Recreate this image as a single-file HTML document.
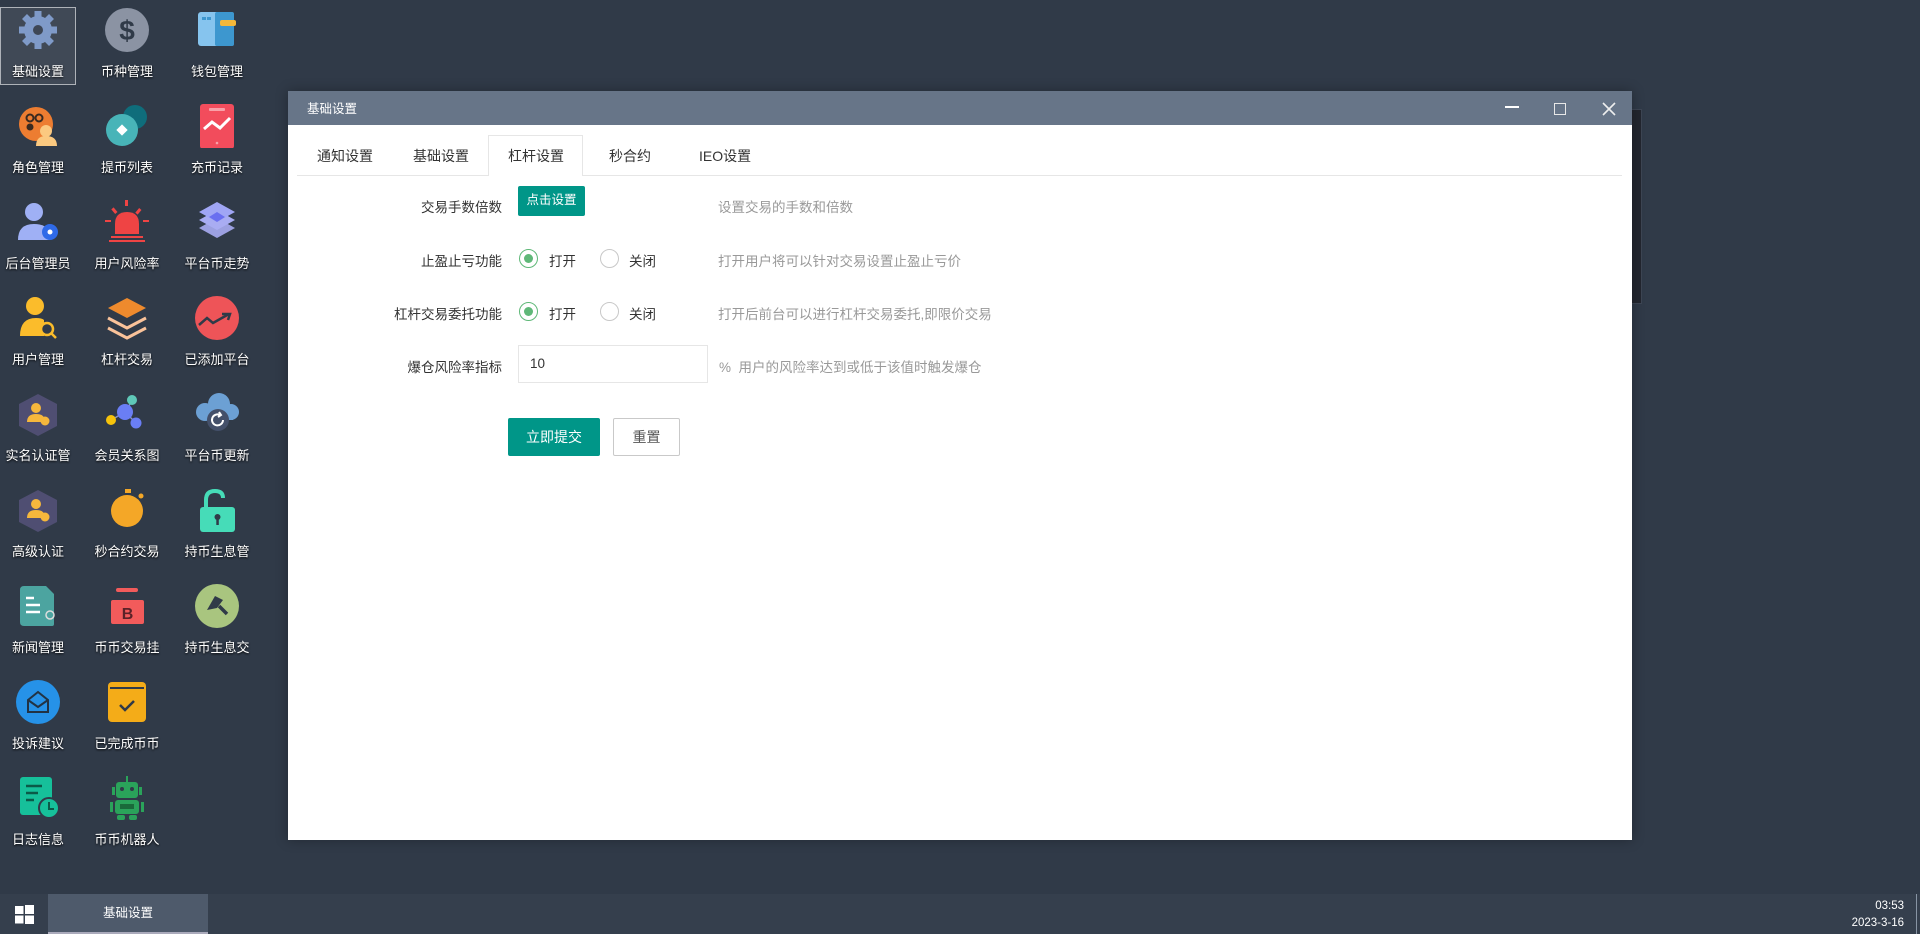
<!DOCTYPE html>
<html><head><meta charset="utf-8"><style>
*{margin:0;padding:0;box-sizing:border-box}
body{width:1920px;height:934px;overflow:hidden;background:#303a48;font-family:"Liberation Sans","Noto Sans CJK SC",sans-serif;position:relative}
.ic{position:absolute;width:90px;text-align:center;color:#fff;font-size:13px}
.ic svg{display:block;margin:0 auto}
.ic span{position:absolute;left:0;width:90px;top:53px;text-shadow:0 1px 2px #000}
.abs{position:absolute}
.lbl{position:absolute;right:1418px;font-size:13.5px;color:#333;white-space:nowrap}
.desc{position:absolute;font-size:13.5px;color:#999;white-space:nowrap}
.radio{position:absolute;width:19px;height:19px;border-radius:50%;border:1px solid #c8c8c8;background:#fff}
.radio.on{border-color:#5fb878}
.radio.on::after{content:"";position:absolute;left:4px;top:4px;width:9px;height:9px;border-radius:50%;background:#5fb878}
.rt{position:absolute;font-size:13.5px;color:#333}
.tab{position:absolute;top:146px;font-size:14px;color:#333}
</style></head><body>

<div class="abs" style="left:0;top:7px;width:76px;height:78px;border:1px solid #aeb2b8;background:rgba(255,255,255,0.08)"></div>

<div class="ic" style="left:-7px;top:8px"><svg width="44" height="44" viewBox="0 0 44 44"><g fill="#7f9ac8"><circle cx="22" cy="22" r="14"/><g stroke="#7f9ac8" stroke-width="7"><line x1="22" y1="3" x2="22" y2="41"/><line x1="3" y1="22" x2="41" y2="22"/><line x1="8.5" y1="8.5" x2="35.5" y2="35.5"/><line x1="35.5" y1="8.5" x2="8.5" y2="35.5"/></g></g><circle cx="22" cy="22" r="5" fill="#3e4756"/></svg><span>基础设置</span></div>
<div class="ic" style="left:-7px;top:104px"><svg width="44" height="44" viewBox="0 0 44 44"><circle cx="20" cy="20" r="17" fill="#ed7d31"/><circle cx="14" cy="14" r="3.5" fill="none" stroke="#3a2a20" stroke-width="2"/><circle cx="23" cy="14" r="3.5" fill="none" stroke="#3a2a20" stroke-width="2"/><circle cx="14" cy="23" r="3.5" fill="#3a2a20"/><circle cx="30" cy="27" r="6" fill="#fbc980"/><path d="M20 42 Q20 32 30 32 Q41 32 41 42Z" fill="#fbc980"/></svg><span>角色管理</span></div>
<div class="ic" style="left:-7px;top:200px"><svg width="44" height="44" viewBox="0 0 44 44"><circle cx="18" cy="12" r="9" fill="#9fb0f5"/><path d="M2 40 Q2 24 18 24 Q30 24 34 32 L34 40Z" fill="#9fb0f5"/><circle cx="34" cy="32" r="8" fill="#2f6ae8"/><circle cx="34" cy="32" r="2.5" fill="#fff"/></svg><span>后台管理员</span></div>
<div class="ic" style="left:-7px;top:296px"><svg width="44" height="44" viewBox="0 0 44 44"><circle cx="19" cy="10" r="9" fill="#fbbc2b"/><path d="M4 40 Q4 22 20 22 Q26 22 28 24 L28 40Z" fill="#fbbc2b"/><circle cx="31" cy="33" r="6" fill="#303a48" stroke="#fbbc2b" stroke-width="2.5"/><line x1="35" y1="37" x2="40" y2="42" stroke="#fbbc2b" stroke-width="2.5"/></svg><span>用户管理</span></div>
<div class="ic" style="left:-7px;top:392px"><svg width="44" height="46" viewBox="0 0 44 46"><polygon points="22,2 41,12 41,34 22,44 3,34 3,12" fill="#4f4e72"/><circle cx="20" cy="16" r="5" fill="#f6b73c"/><path d="M11 30 Q11 22 20 22 Q27 22 28 26 L28 30Z" fill="#f6b73c"/><circle cx="29" cy="29" r="4.5" fill="#f6b73c"/></svg><span>实名认证管</span></div>
<div class="ic" style="left:-7px;top:488px"><svg width="44" height="46" viewBox="0 0 44 46"><polygon points="22,2 41,12 41,34 22,44 3,34 3,12" fill="#4f4e72"/><circle cx="20" cy="16" r="5" fill="#f6b73c"/><path d="M11 30 Q11 22 20 22 Q27 22 28 26 L28 30Z" fill="#f6b73c"/><circle cx="29" cy="29" r="4.5" fill="#f6b73c"/></svg><span>高级认证</span></div>
<div class="ic" style="left:-7px;top:584px"><svg width="44" height="44" viewBox="0 0 44 44"><path d="M4 6 Q4 2 8 2 L30 2 L38 10 L38 40 Q38 42 36 42 L8 42 Q4 42 4 38Z" fill="#4ca4a0"/><g stroke="#fff" stroke-width="2.5"><line x1="10" y1="14" x2="18" y2="14"/><line x1="10" y1="21" x2="24" y2="21"/><line x1="10" y1="28" x2="24" y2="28"/></g><circle cx="34" cy="31" r="4" fill="none" stroke="#ddd" stroke-width="1.5"/></svg><span>新闻管理</span></div>
<div class="ic" style="left:-7px;top:680px"><svg width="44" height="44" viewBox="0 0 44 44"><circle cx="22" cy="22" r="22" fill="#2692e8"/><path d="M12 20 L22 12 L32 20 L32 32 L12 32Z" fill="none" stroke="#234" stroke-width="2"/><path d="M12 20 L22 27 L32 20" fill="none" stroke="#234" stroke-width="2"/></svg><span>投诉建议</span></div>
<div class="ic" style="left:-7px;top:776px"><svg width="44" height="44" viewBox="0 0 44 44"><rect x="4" y="1" width="32" height="38" rx="3" fill="#16c09a"/><g stroke="#0b5a48" stroke-width="2.5"><line x1="10" y1="10" x2="26" y2="10"/><line x1="10" y1="17" x2="22" y2="17"/><line x1="10" y1="24" x2="18" y2="24"/></g><circle cx="33" cy="32" r="10" fill="#16c09a" stroke="#303a48" stroke-width="2"/><path d="M33 26 L33 33 L38 33" fill="none" stroke="#0b5a48" stroke-width="2"/></svg><span>日志信息</span></div>

<div class="ic" style="left:82px;top:8px"><svg width="44" height="44" viewBox="0 0 44 44"><circle cx="22" cy="22" r="22" fill="#8b93a3"/><text x="22" y="32" font-size="28" font-weight="bold" text-anchor="middle" fill="#303a48" font-family="Liberation Sans">$</text></svg><span>币种管理</span></div>
<div class="ic" style="left:82px;top:104px"><svg width="46" height="44" viewBox="0 0 46 44"><circle cx="31" cy="13" r="12" fill="#0f6d7b"/><circle cx="18" cy="26" r="16" fill="#48b4b8"/><rect x="14" y="22" width="8" height="8" fill="#fff" transform="rotate(45 18 26)"/></svg><span>提币列表</span></div>
<div class="ic" style="left:82px;top:200px"><svg width="44" height="44" viewBox="0 0 44 44"><g fill="#ef4444"><rect x="20" y="0" width="3" height="6"/><rect x="8" y="8" width="3" height="6" transform="rotate(-40 9 11)"/><rect x="32" y="8" width="3" height="6" transform="rotate(40 33 11)"/><rect x="0" y="20" width="6" height="2"/><rect x="38" y="20" width="6" height="2"/><path d="M10 34 L10 24 Q10 12 22 12 Q34 12 34 24 L34 34Z"/><rect x="6" y="36" width="32" height="2"/><rect x="4" y="40" width="36" height="2"/></g></svg><span>用户风险率</span></div>
<div class="ic" style="left:82px;top:296px"><svg width="44" height="44" viewBox="0 0 44 44"><polygon points="22,2 41,12 22,22 3,12" fill="#ee8a2d"/><polyline points="3,22 22,32 41,22" fill="none" stroke="#f9c29a" stroke-width="3"/><polyline points="3,32 22,42 41,32" fill="none" stroke="#f9c29a" stroke-width="3"/></svg><span>杠杆交易</span></div>
<div class="ic" style="left:82px;top:392px"><svg width="44" height="44" viewBox="0 0 44 44"><g stroke="#8b93c8" stroke-width="1.5"><line x1="20" y1="20" x2="27" y2="9"/><line x1="20" y1="20" x2="8" y2="27"/><line x1="20" y1="20" x2="30" y2="30"/></g><circle cx="27" cy="8" r="5" fill="#5fc8b8"/><circle cx="20" cy="20" r="8" fill="#6a7ef5"/><circle cx="6" cy="28" r="5" fill="#f6c30b"/><circle cx="31" cy="31" r="5.5" fill="#6a7ef5"/></svg><span>会员关系图</span></div>
<div class="ic" style="left:82px;top:488px"><svg width="44" height="44" viewBox="0 0 44 44"><rect x="20" y="1" width="6" height="4" fill="#f4a727"/><circle cx="36" cy="8" r="2.5" fill="#f4a727"/><circle cx="22" cy="23" r="16" fill="#f4a727"/></svg><span>秒合约交易</span></div>
<div class="ic" style="left:82px;top:584px"><svg width="44" height="44" viewBox="0 0 44 44"><rect x="11" y="4" width="22" height="4" rx="2" fill="#f25b5b"/><rect x="6" y="16" width="33" height="24" rx="2" fill="#f25b5b"/><text x="22.5" y="35" font-size="16" font-weight="bold" text-anchor="middle" fill="#5a2228" font-family="Liberation Sans">B</text></svg><span>币币交易挂</span></div>
<div class="ic" style="left:82px;top:680px"><svg width="44" height="44" viewBox="0 0 44 44"><rect x="3" y="2" width="38" height="40" rx="4" fill="#f4ac18"/><line x1="5" y1="8" x2="39" y2="8" stroke="#303a48" stroke-width="2"/><polyline points="15,25 20,30 29,21" fill="none" stroke="#303a48" stroke-width="2.5"/></svg><span>已完成币币</span></div>
<div class="ic" style="left:82px;top:776px"><svg width="44" height="46" viewBox="0 0 44 46"><g fill="#2aa35a"><rect x="21" y="0" width="2" height="6"/><rect x="11" y="6" width="22" height="16" rx="3"/><rect x="7" y="11" width="3" height="8"/><rect x="34" y="11" width="3" height="8"/><rect x="10" y="24" width="24" height="14" rx="3"/><rect x="5" y="26" width="3" height="10"/><rect x="36" y="26" width="3" height="10"/><rect x="12" y="39" width="8" height="5" rx="2"/><rect x="24" y="39" width="8" height="5" rx="2"/></g><circle cx="17" cy="13" r="2" fill="#303a48"/><circle cx="27" cy="13" r="2" fill="#303a48"/><rect x="15" y="28" width="14" height="5" fill="#1a6a3a"/></svg><span>币币机器人</span></div>

<div class="ic" style="left:172px;top:8px"><svg width="44" height="44" viewBox="0 0 44 44"><rect x="3" y="4" width="36" height="34" rx="3" fill="#86c4ee"/><rect x="20" y="4" width="19" height="34" rx="2" fill="#3d97cf"/><rect x="7" y="9" width="4" height="3" fill="#3d97cf"/><rect x="12" y="9" width="4" height="3" fill="#3d97cf"/><rect x="25" y="12" width="16" height="6" rx="2" fill="#f4b83a"/></svg><span>钱包管理</span></div>
<div class="ic" style="left:172px;top:104px"><svg width="44" height="44" viewBox="0 0 44 44"><rect x="5" y="0" width="34" height="45" rx="3" fill="#f24c5c"/><rect x="14" y="4" width="16" height="3" rx="1" fill="#f9a0a8"/><polyline points="9,25 17,18 25,24 35,14" fill="none" stroke="#fff" stroke-width="3"/><circle cx="22" cy="39" r="1.3" fill="#f9a0a8"/></svg><span>充币记录</span></div>
<div class="ic" style="left:172px;top:200px"><svg width="44" height="44" viewBox="0 0 44 44"><polygon points="22,30 40,20 22,10 4,20" fill="#a8acf2"/><polygon points="22,38 40,28 22,18 4,28" fill="#a8acf2" opacity=".9"/><polygon points="22,22 40,12 22,2 4,12" fill="#a0a6f5"/><polygon points="22,22 30,17 22,12 14,17" fill="#6a6ff0"/></svg><span>平台币走势</span></div>
<div class="ic" style="left:172px;top:296px"><svg width="44" height="44" viewBox="0 0 44 44"><circle cx="22" cy="22" r="22" fill="#ee5458"/><polyline points="4,29 12,22 18,27 34,18" fill="none" stroke="#303a48" stroke-width="2.5"/><polyline points="27,18 35,18 33,24" fill="none" stroke="#303a48" stroke-width="2.5"/></svg><span>已添加平台</span></div>
<div class="ic" style="left:172px;top:392px"><svg width="44" height="44" viewBox="0 0 44 44"><circle cx="24" cy="12" r="11" fill="#6ca0d4"/><circle cx="10" cy="20" r="9" fill="#6ca0d4"/><circle cx="36" cy="20" r="8" fill="#6ca0d4"/><rect x="8" y="14" width="30" height="14" fill="#6ca0d4"/><circle cx="23" cy="28" r="11" fill="#44506a"/><path d="M28 28 A5.5 5.5 0 1 1 25 23" fill="none" stroke="#fff" stroke-width="2"/><polyline points="24,20 26,23 23,25" fill="none" stroke="#fff" stroke-width="2"/></svg><span>平台币更新</span></div>
<div class="ic" style="left:172px;top:488px"><svg width="44" height="44" viewBox="0 0 44 44"><path d="M11 22 L11 12 Q11 3 20 3 Q28 3 28 10" fill="none" stroke="#46dcb8" stroke-width="4"/><rect x="5" y="19" width="35" height="25" rx="3" fill="#46dcb8"/><circle cx="22.5" cy="29" r="3" fill="#303a48"/><rect x="21.3" y="30" width="2.5" height="7" fill="#303a48"/></svg><span>持币生息管</span></div>
<div class="ic" style="left:172px;top:584px"><svg width="44" height="44" viewBox="0 0 44 44"><circle cx="22" cy="22" r="22" fill="#a9c57f"/><polygon points="12,26 20,12 28,16 22,24" fill="#303a48"/><line x1="24" y1="22" x2="32" y2="30" stroke="#303a48" stroke-width="3.5"/></svg><span>持币生息交</span></div>

<div class="abs" style="left:1600px;top:109px;width:42px;height:195px;background:#22262f;border:1px solid #3e4654"></div>

<div class="abs" style="left:288px;top:91px;width:1344px;height:749px;background:#fff;box-shadow:0 0 12px rgba(0,0,0,.3)">
  <div class="abs" style="left:0;top:0;width:1344px;height:34px;background:#677588"></div>
  <div class="abs" style="left:19px;top:7px;color:#fff;font-size:12.5px">基础设置</div>
  <div class="abs" style="left:1217px;top:15px;width:14px;height:2px;background:#fff"></div>
  <div class="abs" style="left:1266px;top:12px;width:12px;height:12px;border:1.5px solid #e8e8e8"></div>
  <svg class="abs" style="left:1314px;top:11px" width="14" height="14"><path d="M1 1 L13 13 M13 1 L1 13" stroke="#eee" stroke-width="1.6"/></svg>
  <div class="abs" style="left:9px;top:84px;width:1325px;height:1px;background:#e6e6e6"></div>
  <div class="abs" style="left:200px;top:44px;width:95px;height:41px;background:#fff;border:1px solid #e6e6e6;border-bottom:none"></div>
</div>
<div class="tab" style="left:317px">通知设置</div>
<div class="tab" style="left:413px">基础设置</div>
<div class="tab" style="left:508px">杠杆设置</div>
<div class="tab" style="left:609px">秒合约</div>
<div class="tab" style="left:699px">IEO设置</div>

<div class="lbl" style="top:196px">交易手数倍数</div>
<div class="abs" style="left:518px;top:186px;width:67px;height:30px;background:#009688;color:#fff;font-size:12.5px;line-height:29px;text-align:center;border-radius:2px">点击设置</div>
<div class="desc" style="left:718px;top:196px">设置交易的手数和倍数</div>

<div class="lbl" style="top:250px">止盈止亏功能</div>
<div class="radio on" style="left:519px;top:249px"></div><div class="rt" style="left:549px;top:250px">打开</div>
<div class="radio" style="left:600px;top:249px"></div><div class="rt" style="left:629px;top:250px">关闭</div>
<div class="desc" style="left:718px;top:250px">打开用户将可以针对交易设置止盈止亏价</div>

<div class="lbl" style="top:303px">杠杆交易委托功能</div>
<div class="radio on" style="left:519px;top:302px"></div><div class="rt" style="left:549px;top:303px">打开</div>
<div class="radio" style="left:600px;top:302px"></div><div class="rt" style="left:629px;top:303px">关闭</div>
<div class="desc" style="left:718px;top:303px">打开后前台可以进行杠杆交易委托,即限价交易</div>

<div class="lbl" style="top:356px">爆仓风险率指标</div>
<div class="abs" style="left:518px;top:345px;width:190px;height:38px;border:1px solid #e6e6e6;font-size:13.5px;color:#333;padding:10px 0 0 11px">10</div>
<div class="desc" style="left:719px;top:356px">%&nbsp;&nbsp;用户的风险率达到或低于该值时触发爆仓</div>

<div class="abs" style="left:508px;top:418px;width:92px;height:38px;background:#009688;color:#fff;font-size:14px;line-height:38px;text-align:center;border-radius:2px">立即提交</div>
<div class="abs" style="left:613px;top:418px;width:67px;height:38px;border:1px solid #c9c9c9;color:#555;font-size:14px;line-height:36px;text-align:center;border-radius:2px;background:#fff">重置</div>

<div class="abs" style="left:0;top:894px;width:1920px;height:40px;background:#353f4d"></div>
<svg class="abs" style="left:15px;top:905px" width="19" height="19"><g fill="#fff"><rect x="0" y="1" width="8.5" height="8" /><rect x="10" y="0" width="9" height="9"/><rect x="0" y="10.5" width="8.5" height="8"/><rect x="10" y="10.5" width="9" height="8.5"/></g></svg>
<div class="abs" style="left:48px;top:894px;width:160px;height:40px;background:#4e5a6b;color:#fff;font-size:12.5px;text-align:center;line-height:38px">基础设置</div>
<div class="abs" style="left:48px;top:932px;width:160px;height:2px;background:#aab"></div>
<div class="abs" style="left:1840px;top:898px;width:70px;color:#fff;font-size:11.5px;text-align:right;line-height:17px;padding-right:6px">03:53<br>2023-3-16</div>
<div class="abs" style="left:1916px;top:894px;width:1px;height:40px;background:#8894a4"></div>
</body></html>
